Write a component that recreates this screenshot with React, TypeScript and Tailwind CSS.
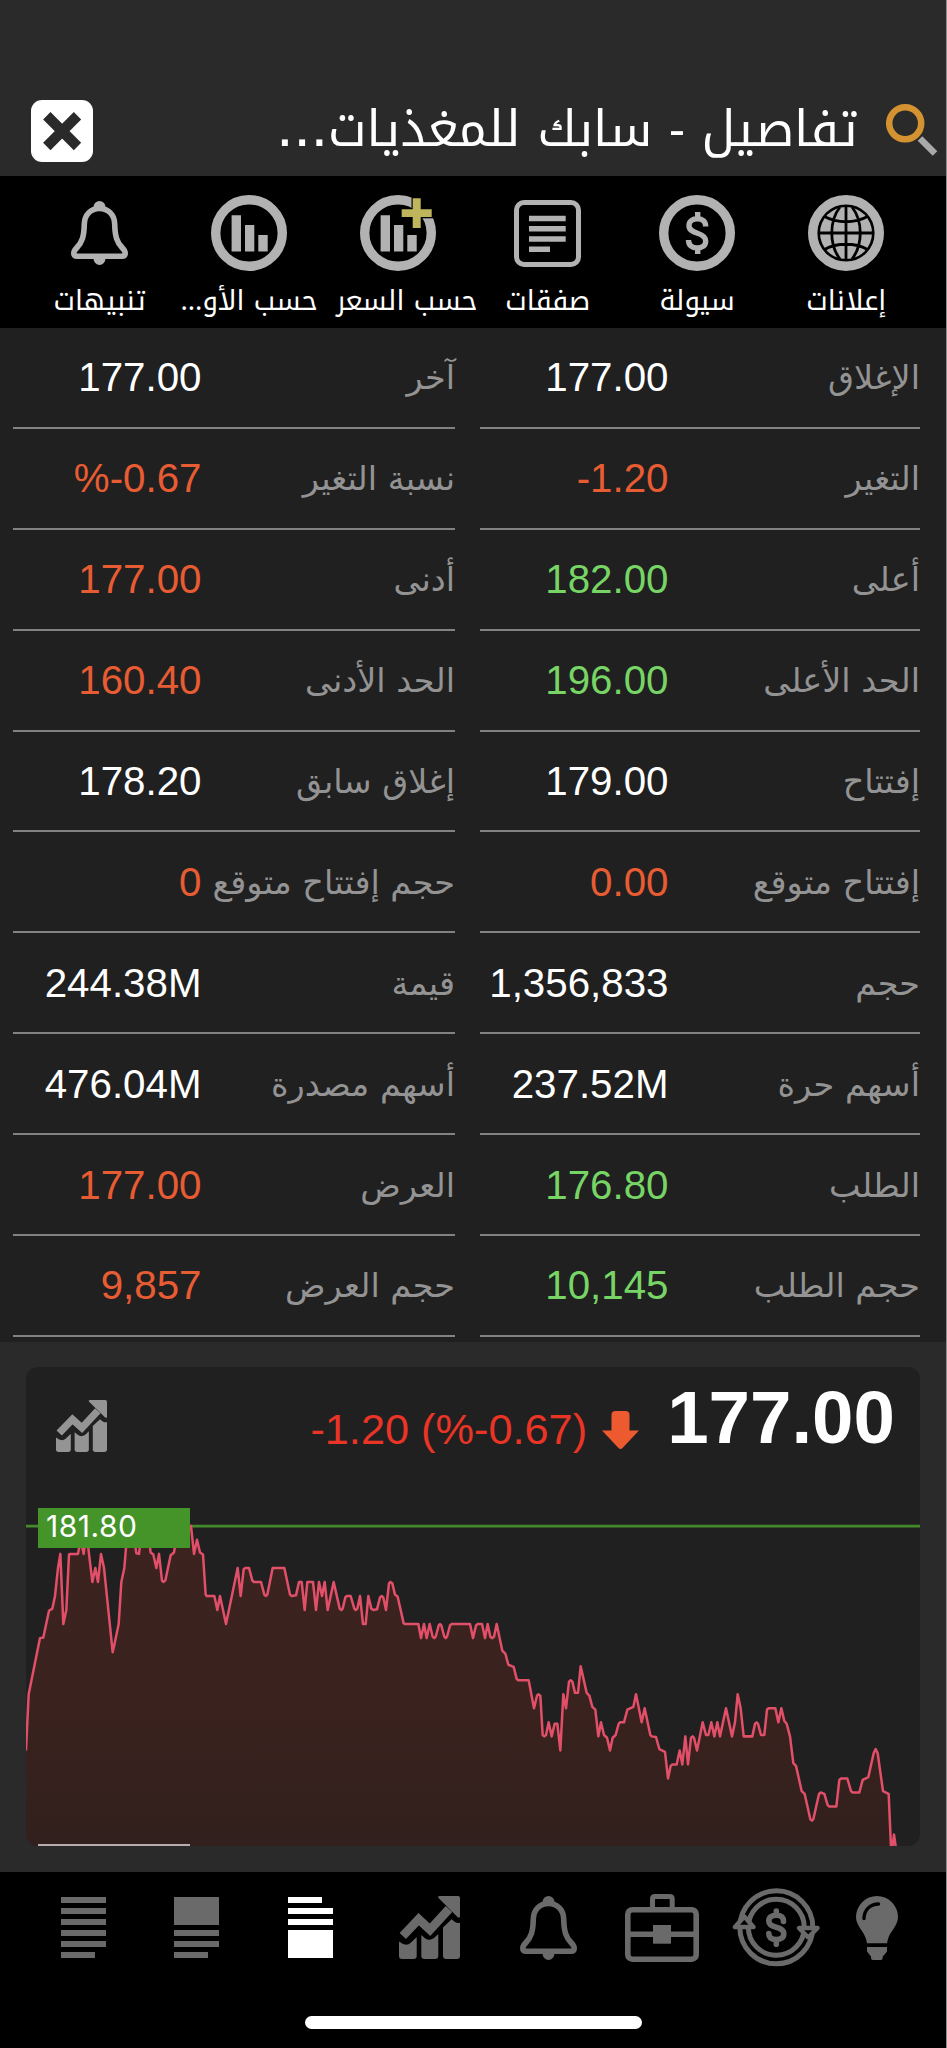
import { ReactNode } from "react";
import clsx from "clsx";

type Tone = "up" | "down" | "flat";
type Quote = { label: string; value: string; tone: Tone };

const toneClass: Record<Tone, string> = {
  up: "text-[#77d565]",
  down: "text-[#e85c33]",
  flat: "text-white",
};

// each row holds the right-hand quote first, the page reads right to left
const rows: [Quote, Quote][] = [
  [
    { label: "الإغلاق", value: "177.00", tone: "flat" },
    { label: "آخر", value: "177.00", tone: "flat" },
  ],
  [
    { label: "التغير", value: "-1.20", tone: "down" },
    { label: "نسبة التغير", value: "%-0.67", tone: "down" },
  ],
  [
    { label: "أعلى", value: "182.00", tone: "up" },
    { label: "أدنى", value: "177.00", tone: "down" },
  ],
  [
    { label: "الحد الأعلى", value: "196.00", tone: "up" },
    { label: "الحد الأدنى", value: "160.40", tone: "down" },
  ],
  [
    { label: "إفتتاح", value: "179.00", tone: "flat" },
    { label: "إغلاق سابق", value: "178.20", tone: "flat" },
  ],
  [
    { label: "إفتتاح متوقع", value: "0.00", tone: "down" },
    { label: "حجم إفتتاح متوقع", value: "0", tone: "down" },
  ],
  [
    { label: "حجم", value: "1,356,833", tone: "flat" },
    { label: "قيمة", value: "244.38M", tone: "flat" },
  ],
  [
    { label: "أسهم حرة", value: "237.52M", tone: "flat" },
    { label: "أسهم مصدرة", value: "476.04M", tone: "flat" },
  ],
  [
    { label: "الطلب", value: "176.80", tone: "up" },
    { label: "العرض", value: "177.00", tone: "down" },
  ],
  [
    { label: "حجم الطلب", value: "10,145", tone: "up" },
    { label: "حجم العرض", value: "9,857", tone: "down" },
  ],
];

// intraday ticks: [time, ticks below the day high]
const sessions: { start: number; ticks: [number, number][] }[] = [
  {
    start: 0,
    ticks: [
      [78, 16], [86, 12], [120, 8], [130, 7.95], [147, 6.05], [157, 5.9], [165, 5], [174, 3], [181, 2], [190, 7],
      [199, 6], [207, 2.05], [210, 2], [234, 2], [242, 1], [251, 2], [256, 1], [262, 1], [277, 4], [286, 3],
      [294, 4], [303, 2], [312, 3], [338, 9], [342, 8.6], [356, 7], [364, 4], [373, 3], [380, 1], [390, 0],
      [403, 1], [409, 1.95], [417, 2], [422, 1], [447, 1], [452, 1.9], [460, 2.05], [469, 3], [477, 2], [486, 3.9],
      [490, 4], [496, 3.9], [512, 2.1], [522, 1.9], [528, 1], [560, 0.5], [573, 0], [582, 2], [591, 1], [600, 1.9],
      [609, 2.05], [617, 4.9], [620, 5], [643, 5], [652, 6], [660, 5], [678, 7], [713, 3], [722, 5], [731, 3.1],
      [736, 3], [747, 3], [757, 3.9], [762, 4], [783, 4], [793, 4.9], [797, 5], [802, 4.9], [818, 3], [853, 3],
      [870, 4.9], [875, 5], [888, 4.95], [897, 4], [905, 4], [914, 6], [922, 4],
    ],
  },
  {
    start: 930,
    ticks: [
      [0, 4], [9, 4], [18, 6], [27, 4], [36, 5], [44, 4], [53, 6], [71, 4], [89, 5.9], [94, 6], [98, 5.9],
      [106, 5.1], [110, 5], [122, 5], [133, 5.9], [137, 6], [142, 5.9], [150, 5], [159, 7], [167, 7], [175, 5],
      [184, 5.9], [190, 6], [201, 5.95], [210, 5.1], [215, 5], [220, 5.1], [228, 6], [237, 4.1], [241, 4],
      [247, 4.1], [255, 4.9], [263, 5.05], [281, 6.95], [286, 7], [325, 7], [333, 8], [342, 7], [350, 8], [359, 7],
      [368, 7.9], [373, 8], [377, 7.9], [386, 7.1], [390, 7], [394, 7.1], [403, 7.9], [407, 8], [411, 7.9],
      [420, 7.1], [425, 7], [480, 7], [489, 8], [498, 7.1], [503, 7], [516, 7], [525, 8], [533, 7], [541, 7.9],
      [547, 8], [552, 7.9], [560, 7], [577, 8.9], [586, 9.1], [595, 9.9], [611, 10.05], [620, 10.9], [624, 11],
      [656, 11], [672, 13], [681, 12.1], [685, 12], [691, 12.1], [698, 14.9], [703, 15], [708, 14.9], [716, 14],
      [725, 15], [734, 14.1], [742, 14.1], [751, 16], [760, 12], [768, 13], [777, 11.1], [782, 11], [787, 11.1],
      [795, 11.9], [804, 11.9], [812, 10], [830, 11.9], [838, 12.1], [847, 12.9], [856, 13.1], [865, 15], [873, 14],
      [882, 14.9], [891, 15.1], [900, 16], [908, 15.1], [917, 14.9], [926, 14.1],
    ],
  },
  {
    start: 1860,
    ticks: [
      [0, 14], [12, 14], [22, 13.1], [40, 12.9], [48, 12], [65, 14], [74, 13], [91, 14.9], [95, 15], [108, 15.05],
      [118, 15.9], [135, 16.1], [144, 18], [152, 17.1], [157, 17], [170, 17], [179, 16], [187, 17], [196, 15],
      [204, 17], [213, 15.1], [218, 15], [222, 15.1], [231, 16], [248, 14], [258, 14.9], [265, 14.9], [274, 14],
      [283, 15], [292, 14], [300, 15], [318, 13], [336, 15], [345, 14], [353, 12], [362, 13], [371, 15], [397, 15],
      [405, 14.1], [410, 14], [414, 14.1], [423, 14.9], [433, 14.9], [441, 13.1], [445, 13], [466, 13], [475, 14],
      [484, 13], [493, 13.9], [500, 14.1], [510, 15], [520, 16.9], [528, 17.1], [545, 18.9], [554, 19.1],
      [571, 20.9], [576, 21], [580, 20.9], [597, 19.1], [602, 19], [613, 19.1], [623, 19.9], [628, 20], [649, 20],
      [658, 18.1], [663, 18], [682, 18], [693, 18.9], [698, 19], [718, 19], [728, 18.1], [745, 17.9], [761, 16.2],
      [767, 15.9], [773, 16.2], [789, 18.9], [806, 19.1], [813, 22.9], [817, 22.9], [822, 22], [828, 23],
    ],
  },
];

const line = sessions
  .flatMap((s) => s.ticks.map(([x, n]) => `${s.start + x - 78},${113 + n * 42}`))
  .join(" ");

function BellIcon({ className }: { className?: string }) {
  return (
    <svg viewBox="0 0 57 64" className={className} fill="none" stroke="currentColor" strokeWidth="5.6">
      <path d="M28.5 7.5C19.5 7.5 13.5 14 13.3 23C13 36 11 41 6 46.5C3.5 49.2 2.8 50 2.8 52C2.8 54 4 55.2 6 55.2H51C53 55.2 54.2 54 54.2 52C54.2 50 53.5 49.2 51 46.5C46 41 44 36 43.7 23C43.5 14 37.5 7.5 28.5 7.5Z" />
      <path stroke="none" fill="currentColor" d="M22.5 6a6 6 0 0 1 12 0zM22.5 57.5a6 6.5 0 0 0 12 0z" />
    </svg>
  );
}

function BarsIcon({ plus }: { plus?: boolean }) {
  return (
    <svg viewBox="0 0 76 76" className="size-[76px]">
      <circle cx="38" cy="38" r="33.3" fill="none" stroke="currentColor" strokeWidth="9.4" />
      <path fill="currentColor" d="M20.6 20.3h9.4v36.2h-9.4zM34 30h9.3v26.5H34zM47.3 40h9.4v16.5h-9.4z" />
      {plus && (
        <>
          <path d="M51.5 0H76v23.3H51.5z" fill="#000" />
          <path d="M52.7 3.3h8v11h11V22h-11v11h-8V22h-11v-7.7h11z" fill="#bfb55c" />
        </>
      )}
    </svg>
  );
}

function DollarIcon() {
  return (
    <svg viewBox="0 0 76 76" className="size-[76px]" fill="none" stroke="currentColor">
      <circle cx="38" cy="38" r="33.3" strokeWidth="9.4" />
      <path
        strokeWidth="5.4"
        d="M46.7 31.5C46.7 26.5 43.5 23.7 38.5 23.7C33.5 23.7 30 26.3 30 30.5C30 35 33.5 36.6 38.5 38.2C43.5 39.8 46.7 41.8 46.7 46.3C46.7 50.5 43.3 53 38.3 53C33 53 29.5 50.2 29.5 45M38.7 17v6.5M38.7 53v6"
      />
    </svg>
  );
}

function GlobeIcon() {
  return (
    <svg viewBox="0 0 76 76" className="size-[76px]" fill="none">
      <circle cx="38" cy="38" r="33.3" stroke="currentColor" strokeWidth="9.4" />
      <circle cx="38" cy="38" r="26" fill="currentColor" />
      <path
        stroke="#000"
        strokeWidth="2.8"
        d="M38 11v54M11 38h54M32 12C21 26 21 50 32 64M44 12C55 26 55 50 44 64M16.5 21.5C29 28.5 47 28.5 59.5 21.5M16.5 54.5C29 47.5 47 47.5 59.5 54.5"
      />
    </svg>
  );
}

function TradesIcon() {
  return (
    <svg viewBox="0 0 67 67" className="size-[67px]">
      <rect x="2.5" y="2.5" width="62" height="62" rx="7.5" fill="none" stroke="currentColor" strokeWidth="5" />
      <path fill="currentColor" d="M15 15.7h36.7v5.5H15zM15 25.9h36.7v5.5H15zM15 36.2h36.7v5.5H15zM15 46.5h21v5.5H15z" />
    </svg>
  );
}

function ChartIcon({ className }: { className?: string }) {
  return (
    <svg viewBox="0 0 61 63" preserveAspectRatio="none" className={className} fill="currentColor">
      <path d="M3.8 40L19.7 23.3L31 33.8L50 13" fill="none" stroke="currentColor" strokeWidth="8.8" />
      <path d="M39 0.5Q39.5 0 41 0H59Q61 0 61 2V20.5Q60.5 22.5 58.5 21L40.5 3Q39 1.5 39 0.5Z" />
      <path d="M0 45.5Q7 51 11.5 47L17.7 41V60Q17.7 63 14.5 63H3.2Q0 63 0 60ZM22.3 39L26 42.2Q30.5 45.5 35 42L39.3 38V60Q39.3 63 36 63H25.5Q22.3 63 22.3 60ZM44 31.5L52.6 23.3L56 26Q58.5 27.5 61 26.8V60Q61 63 57.8 63H47.2Q44 63 44 60Z" />
    </svg>
  );
}

function BriefcaseIcon() {
  return (
    <svg viewBox="0 0 74 68" className="h-[68px] w-[74px]" fill="none" stroke="currentColor" strokeWidth="5.6">
      <rect x="2.8" y="15.7" width="68.4" height="49.5" rx="4.5" />
      <path d="M27.5 15V5q0-2.5 2.5-2.5h14.7q2.5 0 2.5 2.5v10" strokeWidth="5" />
      <path d="M3 40.2h68" />
      <path d="M28 31h18v18.7H28z" fill="currentColor" stroke="none" />
    </svg>
  );
}

function CycleIcon() {
  return (
    <svg viewBox="0 0 88 79" className="h-[79px] w-[88px]" fill="none" stroke="currentColor">
      <circle cx="44.3" cy="39.3" r="36.5" strokeWidth="5" />
      <circle cx="44.3" cy="39.3" r="28" strokeWidth="5" />
      <path d="M12.3 28.5L3 39H21.5Z" fill="#000" strokeWidth="4.5" strokeLinejoin="round" />
      <path d="M76.3 49.5L67 40H85.5Z" fill="#000" strokeWidth="4.5" strokeLinejoin="round" />
      <path
        strokeWidth="5.6"
        strokeLinecap="round"
        d="M51.5 33.5C51.5 29 49 27.3 44.3 27.3C39.5 27.3 36.8 29.5 36.8 33C36.8 37 40 38.2 44.3 39.3C49 40.5 51.8 42 51.8 45.8C51.8 49.5 49 51.5 44.3 51.5C39.5 51.5 36.8 49.5 36.8 45.5M44.3 23v4M44.3 52v4.2"
      />
    </svg>
  );
}

function BulbIcon() {
  return (
    <svg viewBox="0 0 42 64" className="h-16 w-[42px]" fill="currentColor">
      <path d="M21 0A21 21 0 0 1 42 21C42 30 34 35 32 43L31 47.3H11L10 43C8 35 0 30 0 21A21 21 0 0 1 21 0Z" />
      <path d="M11 51H31V55.5L29 58L26.7 60.5V62Q26.7 64 24.7 64H17Q15 64 15 62V60.5L13 58L11 55.5Z" />
      <path d="M8 22.5C8 14 14 8.2 22.5 8" fill="none" stroke="#000" strokeWidth="3.4" strokeLinecap="round" />
    </svg>
  );
}

function ListIcon({ d }: { d: string }) {
  return (
    <svg viewBox="0 0 45 61" className="h-[61px] w-[45px]" fill="currentColor">
      <path d={d} />
    </svg>
  );
}

const tools: { label: string; icon: ReactNode; shift?: boolean }[] = [
  { label: "إعلانات", icon: <GlobeIcon /> },
  { label: "سيولة", icon: <DollarIcon /> },
  { label: "صفقات", icon: <TradesIcon /> },
  { label: "حسب السعر", icon: <BarsIcon plus />, shift: true },
  { label: "حسب الأو...", icon: <BarsIcon /> },
  { label: "تنبيهات", icon: <BellIcon className="h-16 w-[57px]" /> },
];

function QuoteCell({ label, value, tone }: Quote) {
  return (
    <div className="flex h-full items-center border-b-[2.5px] border-[#828282]">
      <span className="w-0 flex-1 whitespace-nowrap pt-[2px] font-['DejaVu_Sans',sans-serif] text-[33.5px] leading-[60px] text-[#939393]">
        {label}
      </span>
      <span dir="ltr" className={clsx("w-[188.5px] shrink-0 pt-[2px] text-right text-[40.3px] leading-[48px]", toneClass[tone])}>
        {value}
      </span>
    </div>
  );
}

export default function App() {
  return (
    <div dir="rtl" className="h-[2048px] w-[947px] overflow-hidden border-r border-[#8c8c8c] bg-[#2a2a2a] font-['Liberation_Sans',Arial,sans-serif] text-white">
      <header className="flex h-44 items-start justify-between pl-[31px] pr-2 pt-[100px]">
        <div className="flex items-start">
          <svg viewBox="0 0 52 52" className="mt-1 size-[52px]" fill="none" strokeWidth="6.5">
            <path d="M34 34.5L49 49.5" stroke="#a9a9a9" />
            <circle cx="19.2" cy="19.3" r="16" stroke="#d49330" />
          </svg>
          <h1 className="mr-[28px] flex items-baseline whitespace-nowrap font-['Noto_Kufi_Arabic','DejaVu_Sans',sans-serif] text-[49.5px] leading-[60px]">
            <span>تفاصيل - سابك للمغذيات</span>
            <span className="font-['Liberation_Sans',sans-serif] text-[62px] leading-[20px]">...</span>
          </h1>
        </div>
        <button className="flex size-[62px] items-center justify-center rounded-[11px] bg-white">
          <svg viewBox="0 0 62 62" className="size-[62px]" stroke="#2a2a2a" strokeWidth="10.4">
            <path d="M15.8 15.8L46.5 46.5M46.5 15.8L15.8 46.5" />
          </svg>
        </button>
      </header>

      <nav className="grid h-[152px] grid-cols-6 bg-black px-[25px] pt-[19px]">
        {tools.map((t) => (
          <button key={t.label} className="flex flex-col items-center">
            <span className="flex h-[76px] items-center text-[#b2b2b2]">{t.icon}</span>
            <span
              className={clsx(
                "mt-[5px] whitespace-nowrap font-['Noto_Kufi_Arabic','DejaVu_Sans',sans-serif] text-[27.5px] leading-[50px]",
                t.shift && "mr-[-17px]"
              )}
            >
              {t.label}
            </span>
          </button>
        ))}
      </nav>

      <section className="h-[1014px] bg-[#202020] pl-[13px] pr-[26px]">
        {rows.map((pair) => (
          <div key={pair[0].label} className="grid h-[100.9px] grid-cols-[440px_442px] gap-x-[25px]">
            {pair.map((q) => (
              <QuoteCell key={q.label} {...q} />
            ))}
          </div>
        ))}
      </section>

      <section className="px-[26px] pb-[26px] pt-[25px]">
        <div className="flex h-[479px] flex-col overflow-hidden rounded-xl bg-[#202020]">
          <div className="flex h-[104px] items-start justify-between pl-[30px] pr-[25px]">
            <div dir="ltr" className="order-2 mt-[33px] text-[#949494]">
              <ChartIcon className="h-[52px] w-[51px]" />
            </div>
            <div className="flex items-baseline pt-px">
              <span className="text-[74.5px] font-bold leading-[100px]">177.00</span>
              <svg viewBox="0 0 37 38" className="mr-[28px] h-[38px] w-[37px] translate-y-[6px]" fill="#ee5a2f">
                <path d="M9.5 4q0-4 4-4h10q4 0 4 4v15.5H37L20.5 37q-2 2-4 0L0 19.5h9.5z" />
              </svg>
              <span dir="ltr" className="mr-[15px] translate-y-px text-[43.3px] text-[#ea3426]">-1.20 (%-0.67)</span>
            </div>
          </div>
          <div dir="ltr" className="relative flex-1">
            <svg viewBox="0 -51 2682 1122" preserveAspectRatio="none" className="h-full w-full">
              <defs>
                <linearGradient id="area" x1="0" y1="0" x2="0" y2="1">
                  <stop offset="0" stopColor="#3c231f" />
                  <stop offset="0.55" stopColor="#3a221e" />
                  <stop offset="1" stopColor="#31201d" />
                </linearGradient>
              </defs>
              <polygon points={`0,1076 ${line} 2610,1076`} fill="url(#area)" />
              <path d="M0 114H2682" stroke="#43892a" strokeWidth="8" />
              <polyline points={line} fill="none" stroke="#e24f68" strokeWidth="7.5" strokeLinejoin="round" />
            </svg>
            <div className="absolute left-3 top-[37px] h-[40px] w-[152px] bg-[#459429] pl-2 font-['Inter',sans-serif] text-[30px] leading-[36px] tracking-[0.5px]">
              181.80
            </div>
            <div className="absolute bottom-0 left-3 h-[2px] w-[152px] bg-[#b7aeac]" />
          </div>
        </div>
      </section>

      <footer dir="ltr" className="h-44 bg-black text-[#6a6a6a]">
        <nav className="flex h-[111px] items-center pl-[61px]">
          <ListIcon d="M0 0h45v6H0zM0 11h45v6H0zM0 22h45v6H0zM0 33h45v6H0zM0 44h45v6H0zM0 55h34v6H0z" />
          <span className="ml-[68px]">
            <ListIcon d="M0 0h45v28H0zM0 33h45v6H0zM0 44h45v6H0zM0 55h34v6H0z" />
          </span>
          <span className="ml-[69px] text-white">
            <ListIcon d="M0 0h34v6H0zM0 11h45v6H0zM0 22h45v6H0zM0 33h45v28H0z" />
          </span>
          <ChartIcon className="ml-[66px] h-[63px] w-[61px]" />
          <BellIcon className="ml-[60px] h-16 w-[57px]" />
          <span className="ml-[48px]">
            <BriefcaseIcon />
          </span>
          <span className="ml-[33px]">
            <CycleIcon />
          </span>
          <span className="ml-[36px]">
            <BulbIcon />
          </span>
        </nav>
        <div className="mx-auto mt-[33px] h-[13px] w-[337px] rounded-full bg-white" />
      </footer>
    </div>
  );
}
